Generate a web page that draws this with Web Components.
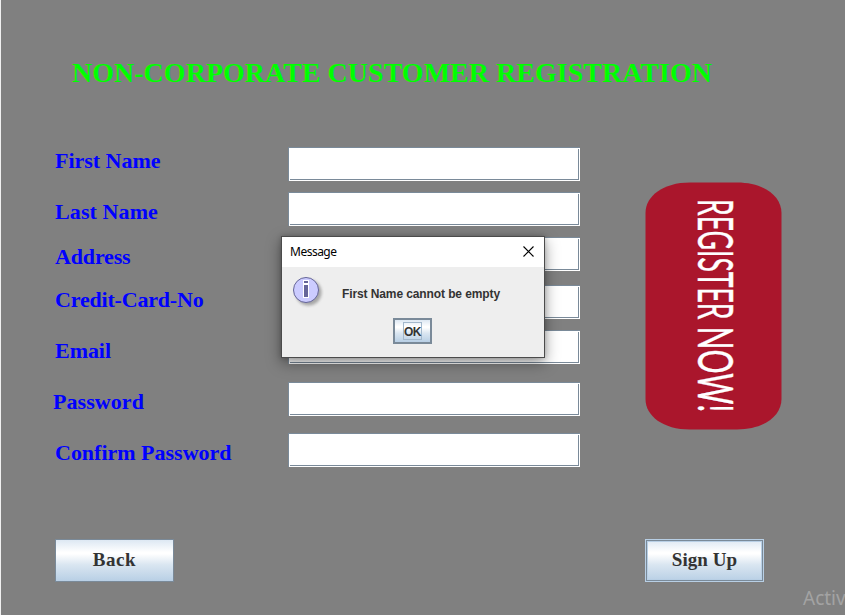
<!DOCTYPE html>
<html lang="en">
<head>
<meta charset="utf-8">
<title>Customer Registration</title>
<style>html,body{margin:0;height:100%;overflow:hidden;background:#808080}</style>
</head>
<body>
<registration-window></registration-window>
<script>
class Base extends HTMLElement {
  render(html) {
    if (!this.shadowRoot) this.attachShadow({ mode: 'open' }).innerHTML = html;
  }
}

// Text run tracked out to a given width.
class FitText extends Base {
  connectedCallback() {
    this.render('<style>:host{display:block;white-space:pre}span{display:inline-block}</style><span></span>');
    const span = this.shadowRoot.querySelector('span');
    span.textContent = this.getAttribute('text');
    const w = span.getBoundingClientRect().width;
    span.style.letterSpacing = (Number(this.getAttribute('width')) - w) / span.textContent.length + 'px';
  }
}
customElements.define('fit-text', FitText);

class TextField extends Base {
  connectedCallback() {
    this.render(`<style>
      :host{display:block;width:292px;height:34px;box-sizing:border-box;background:#fff;border-top:1px solid #7a8a99;border-left:1px solid #7a8a99;padding:1px 1px 1px 1px}
      div{height:100%;box-sizing:border-box;border-right:1px solid #7a8a99;border-bottom:1px solid #7a8a99}
    </style><div></div>`);
  }
}
customElements.define('text-field', TextField);

class MetalButton extends Base {
  connectedCallback() {
    this.render(`<style>
      :host{display:flex;box-sizing:border-box;align-items:center;justify-content:center;border:1px solid #7a8a99;
        background:linear-gradient(#dde8f3 0,#fff 30%,#fff 34%,#dae6f1 60%,#b8cfe5 100%);color:#333;font:bold 19px/22px "Liberation Serif",serif}
      :host([focused]){border-color:#b8cfe5;box-shadow:inset 0 0 0 1px #7a8a99,inset 0 0 0 2px #b8cfe5}
    </style><slot></slot>`);
  }
}
customElements.define('metal-button', MetalButton);

class RegisterBadge extends Base {
  connectedCallback() {
    this.render(`<style>:host{display:block;width:137px;height:248px}svg{display:block}</style>
    <svg width="137" height="248" viewBox="0 0 137 248">
      <path d="M45 .5H92C119 .5 136.500 14 136.500 31V217C136.500 234 119 247.500 92 247.500H45C18 247.500 .5 234 .5 217V31C.5 14 18 .5 45 .5Z" fill="#aa162c"/>
      <g font-family="Lato,sans-serif" font-size="48.5" fill="#fff" stroke="#fff" stroke-width=".4">
        <text data-y="17" data-length="120.500">REGISTER</text>
        <text data-y="144.500" data-length="86">NOW!</text>
      </g>
    </svg>`);
    // Each word runs downwards, condensed to its length.
    for (const t of this.shadowRoot.querySelectorAll('text')) {
      const k = t.dataset.length / t.getComputedTextLength();
      t.setAttribute('transform', `translate(53 ${t.dataset.y}) rotate(90) scale(${k} 1)`);
    }
  }
}
customElements.define('register-badge', RegisterBadge);

class MessageDialog extends Base {
  connectedCallback() {
    this.render(`<style>
      :host{display:flex;flex-direction:column;box-sizing:border-box;width:264px;height:122px;border:1px solid #4b4b4b;background:#eee;box-shadow:0 5px 14px rgba(0,0,0,.4),0 0 5px rgba(0,0,0,.2)}
      header{display:flex;justify-content:space-between;align-items:center;height:30px;background:#fff;padding:0 10px 0 8px;box-sizing:border-box;color:#000;font:12px/16px "Noto Sans",sans-serif}
      header svg{display:block;margin-top:-2px}
      .body{display:flex;padding:8px 0 0 9px;height:43px;box-sizing:border-box}
      .msg{margin:12px 0 0 18px;color:#333;font:bold 12px/15px "Liberation Sans",sans-serif}
      footer{display:flex;padding-left:111px}
      metal-button{width:39px;height:26px;margin-top:8px;border:2px solid #7a8a99}
      .focus{box-sizing:border-box;width:19px;height:18px;border:1px solid #a3b8cc;color:#333;font:bold 12px/18px "Liberation Sans",sans-serif}
    </style>
    <header><fit-text text="Message" width="46.5"></fit-text>
      <svg width="11" height="11" viewBox="0 0 11 11"><path d="M.5.5l10 10M10.500.5l-10 10" stroke="#000" stroke-width="1.1" fill="none"/></svg></header>
    <div class="body">
      <svg width="33" height="33" viewBox="0 0 33 33">
        <defs><filter id="s" x="-30%" y="-30%" width="160%" height="160%"><feGaussianBlur stdDeviation="1.5"/></filter></defs>
        <circle cx="17.500" cy="17.500" r="13" fill="#777" opacity=".6" filter="url(#s)"/>
        <circle cx="15" cy="15" r="12.500" fill="#ccccff" stroke="#666699"/>
        <path d="M12 5h6v18h-6z" fill="#fff"/>
        <path d="M13 6h4v2h-4zM13 10h4v12h-4z" fill="#666699"/>
      </svg>
      <fit-text class="msg" text="First Name cannot be empty" width="158"></fit-text>
    </div>
    <footer><metal-button><fit-text class="focus" text="OK" width="17"></fit-text></metal-button></footer>`);
  }
}
customElements.define('message-dialog', MessageDialog);

class RegistrationWindow extends Base {
  connectedCallback() {
    const labels = [['First Name',105.5],['Last Name',103],['Address',75.5],['Credit-Card-No',148.5],['Email',56],['Password',91],['Confirm Password',176.5]];
    this.render(`<style>
      :host{display:flex;flex-direction:column;position:relative;box-sizing:border-box;width:845px;height:615px;overflow:hidden;background:#808080;border-left:1px solid #f0f0f0}
      .title{margin:56px 0 0 71px;height:34px;color:#0f0;font:bold 28px/34px "Liberation Serif",serif}
      main{display:flex;height:330px;margin-top:57px;padding-left:54px;box-sizing:border-box}
      .labels{display:grid;width:233px;align-content:start;grid-template-rows:51px 45px 43px 51px 51px 51px 26px;color:#00f;font:bold 22px/26px "Liberation Serif",serif;margin-top:1px}
      .labels fit-text:nth-child(6){margin-left:-2px}
      .fields{display:grid;align-content:start;grid-template-rows:45px 45px 48px 45px 52px 51px 34px}
      register-badge{margin:35px 0 0 65px}
      .actions{display:flex;justify-content:space-between;margin:62px 81px 0 54px}
      .actions metal-button{width:119px;height:43px;padding-bottom:2px}
      message-dialog{position:absolute;left:280px;top:236px}
      .mark{position:absolute;left:802px;top:585px;color:#a3a3a3;font:19px/26px "Noto Sans",sans-serif}
    </style>
    <fit-text class="title" text="NON-CORPORATE CUSTOMER REGISTRATION" width="640"></fit-text>
    <main>
      <div class="labels">${labels.map(([t, w]) => `<fit-text text="${t}" width="${w}"></fit-text>`).join('')}</div>
      <div class="fields">${labels.map(() => '<text-field></text-field>').join('')}</div>
      <register-badge></register-badge>
    </main>
    <div class="actions">
      <metal-button><fit-text text="Back" width="43.5"></fit-text></metal-button>
      <metal-button focused><fit-text text="Sign Up" width="65.5"></fit-text></metal-button>
    </div>
    <message-dialog></message-dialog>
    <span class="mark">Activ</span>`);
  }
}
customElements.define('registration-window', RegistrationWindow);
</script>
</body>
</html>
